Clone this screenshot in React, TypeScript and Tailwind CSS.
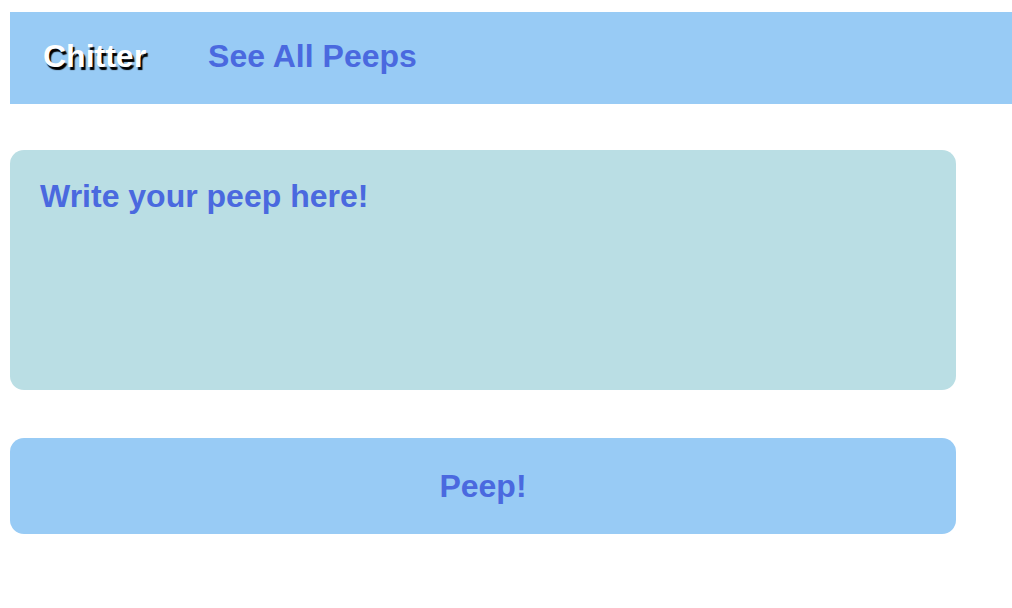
export default function App() {
  return (
    <div className="min-h-screen bg-white pl-[10px] pt-[12px] font-['Liberation_Sans',Arial,sans-serif]">
      <nav className="flex h-[92px] items-start gap-[62px] bg-[#98cbf5] pl-[33px] pt-[26px]">
        <span className="text-[32px] font-bold leading-[37px] text-white [text-shadow:2px_3px_1px_#000]">
          Chitter
        </span>
        <a href="#" className="text-[32px] font-bold leading-[37px] text-[#4a69df]">
          See All Peeps
        </a>
      </nav>

      <form className="mt-[46px] flex w-[946px] flex-col gap-[48px]" onSubmit={(e) => e.preventDefault()}>
        <textarea
          placeholder="Write your peep here!"
          className="h-[240px] w-full resize-none rounded-[14px] bg-[#badee4] px-[30px] py-[28px] text-[32px] font-bold leading-[37px] text-[#4a69df] outline-none placeholder:text-[#4a69df]"
        />
        <button
          type="submit"
          className="flex h-[96px] w-full items-center justify-center rounded-[14px] bg-[#98cbf5] text-[32px] font-bold text-[#4a69df]"
        >
          Peep!
        </button>
      </form>
    </div>
  );
}
